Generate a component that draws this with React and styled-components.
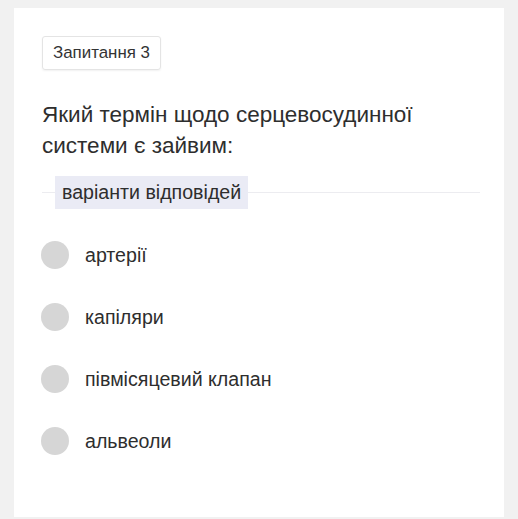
import React from "react";
import styled, { createGlobalStyle } from "styled-components";

const Global = createGlobalStyle`
  html, body { margin: 0; padding: 0; background: #f1f1f1; }
  body { font-family: "Liberation Sans", Arial, Helvetica, sans-serif; color: #2e2e2e; }
`;

const Page = styled.div`
  padding: 8px 14px 2px 14px;
`;

const Card = styled.div`
  width: 490px;
  height: 509px;
  box-sizing: border-box;
  background: #ffffff;
  padding: 28px 24px 0 28px;
  display: flex;
  flex-direction: column;
  align-items: flex-start;
`;

const Badge = styled.div`
  height: 34px;
  box-sizing: border-box;
  padding: 0 10px;
  display: flex;
  align-items: center;
  font-size: 16.9px;
  color: #333;
  border: 1px solid #e4e4e4;
  border-radius: 3px;
  box-shadow: 0 1px 2px rgba(0, 0, 0, 0.06);
`;

const Question = styled.div`
  margin-top: 29px;
  font-size: 22.5px;
  line-height: 31px;
  color: #2e2e2e;
`;

const LegendRow = styled.div`
  margin-top: 15px;
  align-self: stretch;
  display: flex;
  align-items: center;
`;

const Rule = styled.div`
  height: 1px;
  background: #ececf0;
  width: ${(p) => (p.$grow ? "auto" : "13px")};
  flex: ${(p) => (p.$grow ? "1" : "none")};
`;

const Legend = styled.div`
  height: 33px;
  display: flex;
  align-items: center;
  padding: 0 7px;
  background: #eaebf5;
  font-size: 19.6px;
  color: #2e2e2e;
`;

const Options = styled.div`
  margin-top: 15px;
  display: flex;
  flex-direction: column;
`;

const Option = styled.div`
  height: 62px;
  display: flex;
  align-items: center;
  gap: 16px;
  font-size: 19.6px;
  color: #2e2e2e;
`;

const Radio = styled.span`
  width: 28px;
  height: 28px;
  border-radius: 50%;
  background: #d6d6d6;
  flex: none;
  margin-left: -1px;
`;

const options = ["артерії", "капіляри", "півмісяцевий клапан", "альвеоли"];

export default function App() {
  return (
    <>
      <Global />
      <Page>
        <Card>
          <Badge>Запитання 3</Badge>
          <Question>
            Який термін щодо серцевосудинної
            <br />
            системи є зайвим:
          </Question>
          <LegendRow>
            <Rule />
            <Legend>варіанти відповідей</Legend>
            <Rule $grow />
          </LegendRow>
          <Options>
            {options.map((o) => (
              <Option key={o}>
                <Radio />
                {o}
              </Option>
            ))}
          </Options>
        </Card>
      </Page>
    </>
  );
}
